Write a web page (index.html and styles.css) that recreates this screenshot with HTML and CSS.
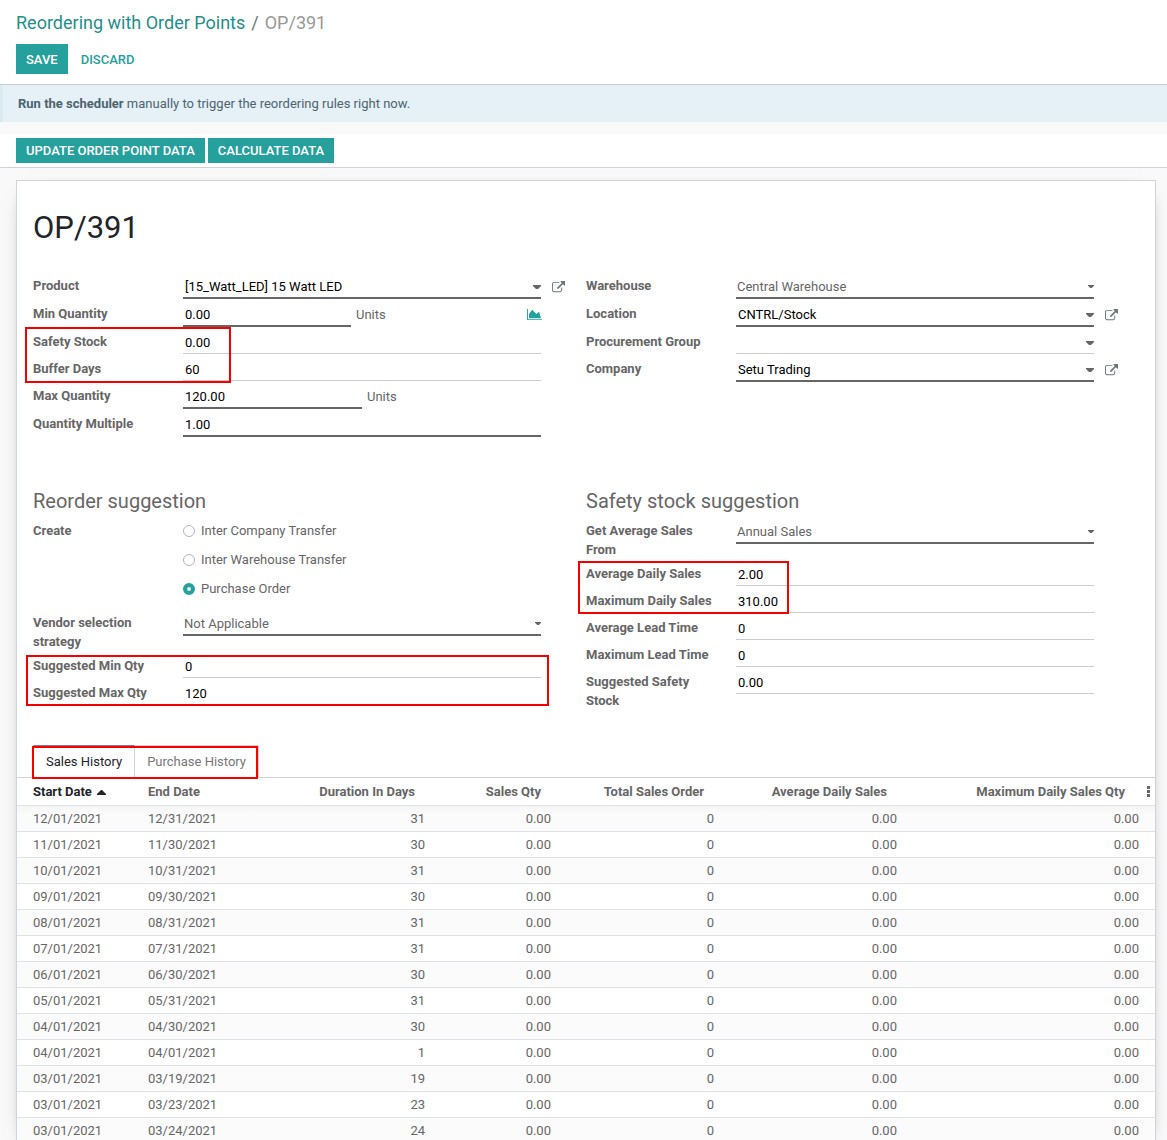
FILE: index.html
```html
<!DOCTYPE html>
<html lang="en">
<head>
<meta charset="utf-8">
<meta name="viewport" content="width=device-width, initial-scale=1">
<title>OP/391</title>
<link rel="stylesheet" href="styles.css">
</head>
<body>
<svg class="sprite" aria-hidden="true">
  <symbol id="external" viewBox="0 0 1792 1792"><path d="M1408 928v320q0 119-84.5 203.5t-203.5 84.5h-832q-119 0-203.5-84.5t-84.5-203.5v-832q0-119 84.5-203.5t203.5-84.5h704q14 0 23 9t9 23v64q0 14-9 23t-23 9h-704q-66 0-113 47t-47 113v832q0 66 47 113t113 47h832q66 0 113-47t47-113v-320q0-14 9-23t23-9h64q14 0 23 9t9 23zm384-864v512q0 26-19 45t-45 19-45-19l-176-176-652 652q-10 10-23 10t-23-10l-114-114q-10-10-10-23t10-23l652-652-176-176q-19-19-19-45t19-45 45-19h512q26 0 45 19t19 45z"/></symbol>
  <symbol id="chart" viewBox="0 0 2048 1792"><path d="M2048 1536v128h-2048v-1536h128v1408h1920zm-384-1024l256 896h-1664v-576l448-576 576 576z"/></symbol>
  <symbol id="caret" viewBox="0 0 8 4"><path d="M0 0h8v1L5 4H3L0 1z"/></symbol>
</svg>
<div class="app">
  <header class="control-panel">
    <nav class="breadcrumb" aria-label="Breadcrumb">
      <a href="#">Reordering with Order Points</a>
      <span class="slash">/</span>
      <span class="current">OP/391</span>
    </nav>
    <div class="actions">
      <button type="button" class="btn btn-primary btn-save">Save</button>
      <button type="button" class="btn btn-link btn-save">Discard</button>
    </div>
  </header>
  <main class="content">
    <div class="alert" role="note"><strong>Run the scheduler</strong> manually to trigger the reordering rules right now.</div>
    <div class="statusbar">
      <button type="button" class="btn btn-primary">Update Order Point Data</button>
      <button type="button" class="btn btn-primary">Calculate Data</button>
    </div>
    <section class="sheet">
      <h1>OP/391</h1>
      <div class="groups">
        <div class="group">
          <div class="row">
            <label for="product">Product</label>
            <div class="field"><input id="product" class="required" value="[15_Watt_LED] 15 Watt LED"><svg class="caret"><use href="#caret"/></svg><button type="button" class="external" aria-label="Open product"><svg><use href="#external"/></svg></button></div>
          </div>
          <div class="row">
            <label for="min">Min Quantity</label>
            <div class="field"><input id="min" class="required qty-min" value="0.00"><span class="unit">Units</span><button type="button" class="forecast" aria-label="Forecast"><svg><use href="#chart"/></svg></button></div>
          </div>
          <div class="marked marked-stock">
            <div class="row">
              <label for="safety">Safety Stock</label>
              <div class="field"><input id="safety" value="0.00"></div>
            </div>
            <div class="row">
              <label for="buffer">Buffer Days</label>
              <div class="field"><input id="buffer" value="60"></div>
            </div>
          </div>
          <div class="row">
            <label for="max">Max Quantity</label>
            <div class="field"><input id="max" class="required qty-max" value="120.00"><span class="unit">Units</span></div>
          </div>
          <div class="row">
            <label for="multiple">Quantity Multiple</label>
            <div class="field"><input id="multiple" class="required" value="1.00"></div>
          </div>
        </div>
        <div class="group">
          <div class="row">
            <label for="warehouse">Warehouse</label>
            <div class="field"><select id="warehouse" class="required"><option>Central Warehouse</option></select><svg class="caret caret-small"><use href="#caret"/></svg></div>
          </div>
          <div class="row">
            <label for="location">Location</label>
            <div class="field"><input id="location" class="required" value="CNTRL/Stock"><svg class="caret"><use href="#caret"/></svg><button type="button" class="external" aria-label="Open location"><svg><use href="#external"/></svg></button></div>
          </div>
          <div class="row">
            <label for="procurement">Procurement Group</label>
            <div class="field"><input id="procurement" value=""><svg class="caret"><use href="#caret"/></svg></div>
          </div>
          <div class="row">
            <label for="company">Company</label>
            <div class="field"><input id="company" class="required" value="Setu Trading"><svg class="caret"><use href="#caret"/></svg><button type="button" class="external" aria-label="Open company"><svg><use href="#external"/></svg></button></div>
          </div>
        </div>
      </div>
      <div class="groups suggestions">
        <div class="group">
          <h2>Reorder suggestion</h2>
          <div class="row" role="radiogroup" aria-labelledby="create">
            <span class="label" id="create">Create</span>
            <div class="radios">
              <label class="radio"><input type="radio" name="create">Inter Company Transfer</label>
              <label class="radio"><input type="radio" name="create">Inter Warehouse Transfer</label>
              <label class="radio"><input type="radio" name="create" checked>Purchase Order</label>
            </div>
          </div>
          <div class="row">
            <label for="vendor">Vendor selection strategy</label>
            <div class="field"><select id="vendor" class="required"><option>Not Applicable</option></select><svg class="caret caret-small"><use href="#caret"/></svg></div>
          </div>
          <div class="marked marked-suggested">
            <div class="row">
              <label for="smin">Suggested Min Qty</label>
              <div class="field"><input id="smin" value="0"></div>
            </div>
            <div class="row">
              <label for="smax">Suggested Max Qty</label>
              <div class="field"><input id="smax" value="120"></div>
            </div>
          </div>
        </div>
        <div class="group">
          <h2>Safety stock suggestion</h2>
          <div class="row">
            <label for="average">Get Average Sales From</label>
            <div class="field"><select id="average" class="required"><option>Annual Sales</option></select><svg class="caret caret-small"><use href="#caret"/></svg></div>
          </div>
          <div class="marked marked-sales">
            <div class="row">
              <label for="ads">Average Daily Sales</label>
              <div class="field"><input id="ads" value="2.00"></div>
            </div>
            <div class="row">
              <label for="mds">Maximum Daily Sales</label>
              <div class="field"><input id="mds" value="310.00"></div>
            </div>
          </div>
          <div class="row">
            <label for="alt">Average Lead Time</label>
            <div class="field"><input id="alt" value="0"></div>
          </div>
          <div class="row">
            <label for="mlt">Maximum Lead Time</label>
            <div class="field"><input id="mlt" value="0"></div>
          </div>
          <div class="row">
            <label for="sss">Suggested Safety Stock</label>
            <div class="field"><input id="sss" value="0.00"></div>
          </div>
        </div>
      </div>
      <div class="tabbar">
        <div class="tabs marked marked-tabs" role="tablist">
          <button type="button" role="tab" class="tab active" aria-selected="true">Sales History</button>
          <button type="button" role="tab" class="tab" aria-selected="false">Purchase History</button>
        </div>
      </div>
      <table class="history">
        <colgroup><col class="c-start"><col class="c-end"><col class="c-days"><col class="c-qty"><col class="c-total"><col class="c-avg"><col class="c-max"><col class="c-menu"></colgroup>
        <thead>
          <tr><th class="sorted">Start Date <svg class="sort"><path d="M0 5V4L4 0h1l4 4v1z"/></svg></th><th>End Date</th><th class="num">Duration In Days</th><th class="num">Sales Qty</th><th class="num">Total Sales Order</th><th class="num">Average Daily Sales</th><th class="num">Maximum Daily Sales Qty</th><th class="menu"><button type="button" aria-label="Optional columns"><svg><path d="M0 0h3v3H0zM0 4h3v3H0zM0 8h3v3H0z"/></svg></button></th></tr>
        </thead>
        <tbody>
          <tr><td>12/01/2021</td><td>12/31/2021</td><td class="num">31</td><td class="num">0.00</td><td class="num">0</td><td class="num">0.00</td><td class="num">0.00</td><td></td></tr>
          <tr><td>11/01/2021</td><td>11/30/2021</td><td class="num">30</td><td class="num">0.00</td><td class="num">0</td><td class="num">0.00</td><td class="num">0.00</td><td></td></tr>
          <tr><td>10/01/2021</td><td>10/31/2021</td><td class="num">31</td><td class="num">0.00</td><td class="num">0</td><td class="num">0.00</td><td class="num">0.00</td><td></td></tr>
          <tr><td>09/01/2021</td><td>09/30/2021</td><td class="num">30</td><td class="num">0.00</td><td class="num">0</td><td class="num">0.00</td><td class="num">0.00</td><td></td></tr>
          <tr><td>08/01/2021</td><td>08/31/2021</td><td class="num">31</td><td class="num">0.00</td><td class="num">0</td><td class="num">0.00</td><td class="num">0.00</td><td></td></tr>
          <tr><td>07/01/2021</td><td>07/31/2021</td><td class="num">31</td><td class="num">0.00</td><td class="num">0</td><td class="num">0.00</td><td class="num">0.00</td><td></td></tr>
          <tr><td>06/01/2021</td><td>06/30/2021</td><td class="num">30</td><td class="num">0.00</td><td class="num">0</td><td class="num">0.00</td><td class="num">0.00</td><td></td></tr>
          <tr><td>05/01/2021</td><td>05/31/2021</td><td class="num">31</td><td class="num">0.00</td><td class="num">0</td><td class="num">0.00</td><td class="num">0.00</td><td></td></tr>
          <tr><td>04/01/2021</td><td>04/30/2021</td><td class="num">30</td><td class="num">0.00</td><td class="num">0</td><td class="num">0.00</td><td class="num">0.00</td><td></td></tr>
          <tr><td>04/01/2021</td><td>04/01/2021</td><td class="num">1</td><td class="num">0.00</td><td class="num">0</td><td class="num">0.00</td><td class="num">0.00</td><td></td></tr>
          <tr><td>03/01/2021</td><td>03/19/2021</td><td class="num">19</td><td class="num">0.00</td><td class="num">0</td><td class="num">0.00</td><td class="num">0.00</td><td></td></tr>
          <tr><td>03/01/2021</td><td>03/23/2021</td><td class="num">23</td><td class="num">0.00</td><td class="num">0</td><td class="num">0.00</td><td class="num">0.00</td><td></td></tr>
          <tr><td>03/01/2021</td><td>03/24/2021</td><td class="num">24</td><td class="num">0.00</td><td class="num">0</td><td class="num">0.00</td><td class="num">0.00</td><td></td></tr>
        </tbody>
      </table>
    </section>
  </main>
</div>
</body>
</html>
```
FILE: styles.css
```css
*, *::after { box-sizing: border-box; }

body {
  margin: 0;
  font: 13px/19px Roboto, "Liberation Sans", sans-serif;
  color: #666;
  background: #f9f9f9;
}

button, input, select { font: inherit; }
button { margin: 0; padding: 0; border: 0; background: none; color: inherit; cursor: pointer; }
svg { display: block; fill: currentColor; }
.sprite { display: none; }

.app { display: flex; flex-direction: column; height: 100vh; }

/* Control panel */
.control-panel {
  flex: none;
  padding: 12px 16px 10px;
  background: #fff;
  border-bottom: 1px solid #ccc;
}
.breadcrumb { display: flex; gap: 6px; font-size: 18px; line-height: 22px; }
.breadcrumb a { color: #1f8f8b; text-decoration: none; }
.breadcrumb .slash { color: #6c757d; }
.breadcrumb .current { color: #999; }
.actions { display: flex; gap: 3px; margin-top: 10px; }

.btn {
  height: 25px;
  padding: 0 10px;
  font-weight: 500;
  text-transform: uppercase;
}
.btn-save { height: 30px; }
.btn-primary { color: #fff; background: #26a09c; }
.btn-link { color: #26a09c; }

/* Scrolling form view */
.content { flex: 1; min-height: 0; overflow-y: auto; scrollbar-width: none; }
.alert {
  padding: 9px 15px;
  border-left: 3px solid #d9eaf1;
  background: #e5f1f6;
  color: #4d6370;
}
.statusbar {
  display: flex;
  gap: 3px;
  margin-top: 12px;
  padding: 4px 16px;
  background: #fff;
  border-bottom: 1px solid #ced4da;
}

.sheet {
  margin: 12px 11px 16px 16px;
  padding-top: 24px;
  background: #fff;
  border: 1px solid #ced4da;
  box-shadow: 0 5px 20px -15px #000;
}
h1 { margin: 0 16px; color: #212529; font-size: 31px; font-weight: 400; line-height: 46px; }
h2 { margin: 0 0 7px; font-size: 20px; font-weight: 400; line-height: 24px; }

/* Field groups */
.groups { display: grid; grid-template-columns: 1fr 1fr; margin: 24px 16px 0; }
.suggestions { margin-top: 48px; }
.group { padding-right: 45px; }
.row { display: grid; grid-template-columns: 150px 1fr; align-items: start; padding-bottom: 4px; }
.row > label, .label { padding: 1px 20px 0 0; font-weight: 700; }
.field { position: relative; display: flex; align-items: flex-start; color: #666; }
.field input, .field select {
  width: 100%;
  height: 23px;
  padding: 0 0 0 2px;
  border: 0;
  border-bottom: 1px solid #ccc;
  border-radius: 0;
  background: transparent;
  color: #000;
  appearance: none;
  outline: 0;
}
.field select { padding-left: 1px; color: #666; }
.field .required { height: 24px; border-bottom: 2px solid #666; }
.field .qty-min { width: 168px; }
.field .qty-max { width: 179px; }
.unit { margin-left: 5px; padding-top: 2px; }
.caret { position: absolute; right: 0; top: 10px; width: 8px; height: 4px; }
.caret-small { width: 6px; height: 3px; }
.external { position: absolute; left: 100%; top: 6px; margin-left: 11px; color: #6c757d; }
.external svg { width: 13px; height: 13px; }
.forecast { margin: 5px -1px 0 auto; color: #26a09c; }
.forecast svg { width: 15px; height: 13px; }

.radios { display: flex; flex-direction: column; gap: 8px; padding-bottom: 9px; }
.radio { display: flex; align-items: center; height: 21px; gap: 6px; }
.radio input {
  width: 12px;
  height: 12px;
  margin: 1px 0 0;
  border: 1px solid #adb5bd;
  border-radius: 50%;
  background: #fff;
  appearance: none;
}
.radio input:checked { border: 4px solid #26a09c; background: #e9ecef; }

/* Red call-out frames drawn over related items */
.marked { position: relative; }
.marked::after { content: ""; position: absolute; border: 2px solid #f80000; pointer-events: none; }
.marked-stock::after { top: -4px; bottom: 2px; left: -8px; width: 206px; }
.marked-suggested::after { top: 0; bottom: 3px; left: -7px; right: -8px; }
.marked-sales::after { top: -2px; bottom: 3px; left: -8px; width: 211px; }
.marked-tabs::after { top: 1px; bottom: -2px; left: -1px; right: 1px; }

/* Notebook */
.tabbar { display: flex; margin-top: 31px; padding: 0 16px; border-bottom: 1px solid #ced4da; }
.tab {
  height: 32px;
  padding: 0 12px;
  border-top: 1px solid #ced4da;
  border-right: 1px solid #ced4da;
  color: #777;
}
.tab.active { border-top-color: #7c7bad; border-left: 1px solid #ced4da; color: #212529; }
.tabs { display: flex; }

.history { width: 100%; table-layout: fixed; border-collapse: separate; border-spacing: 0; }
.c-start { width: 127px; }
.c-end { width: 96px; }
.c-days { width: 189px; }
.c-qty { width: 126px; }
.c-total { width: 163px; }
.c-avg { width: 183px; }
.c-max { width: 242px; }
.c-menu { width: 12px; }
.history th, .history td { padding: 3px 4px; text-align: left; white-space: nowrap; border-bottom: 1px solid #dee2e6; }
.history th { padding-top: 4px; padding-bottom: 4px; font-weight: 700; }
.history .num { text-align: right; }
.history th.num { padding-right: 14px; }
.history th:nth-child(7) { padding-right: 18px; }
.history tr > :first-child { padding-left: 16px; }
.history .sorted { color: #212529; }
.history .menu { padding: 2px 0 0; }
.history .menu svg { width: 3px; height: 11px; margin-left: 4px; }
.sort { display: inline-block; width: 9px; height: 5px; margin-left: 2px; vertical-align: 1px; }
.history tbody tr:nth-child(odd) { background: #fbfbfb; }
.history tbody tr:first-child td { background: linear-gradient(#f5f5f5, #fbfbfb 8px); }
```
